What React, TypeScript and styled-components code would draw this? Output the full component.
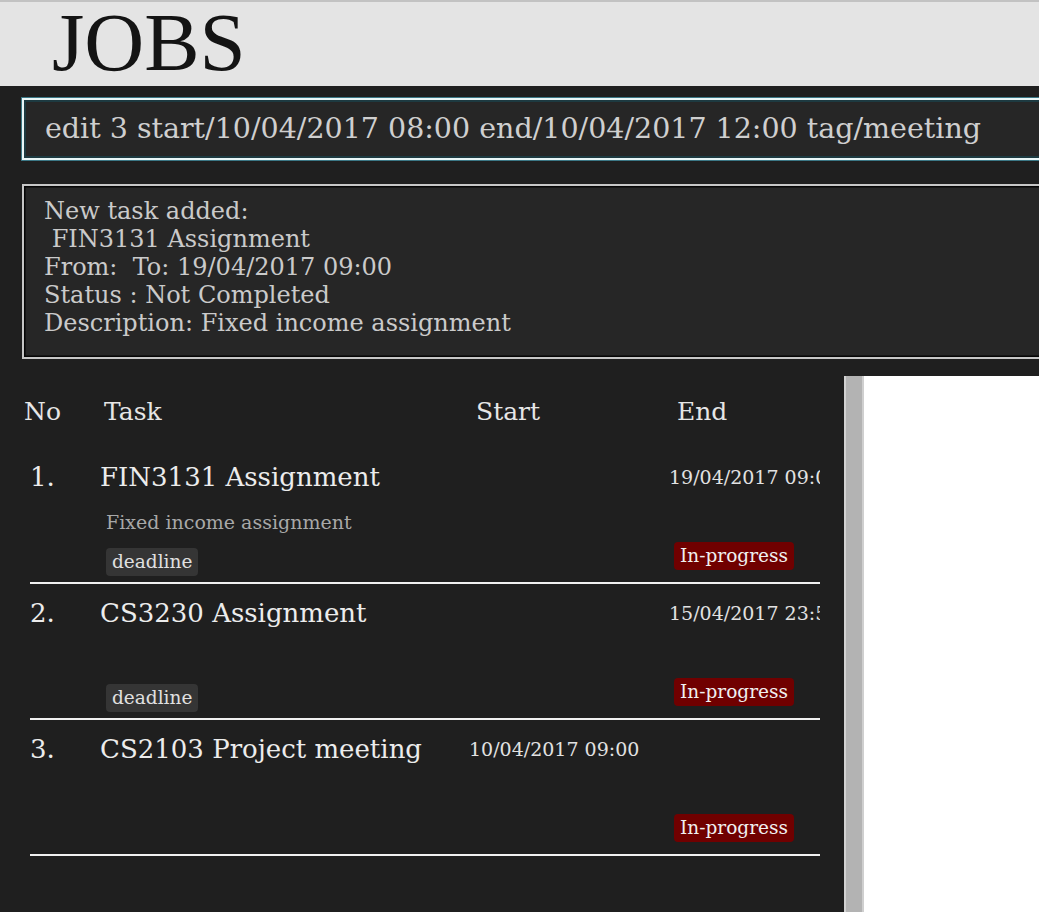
import React from "react";
import styled, { createGlobalStyle } from "styled-components";

const GlobalStyle = createGlobalStyle`
  html, body {
    margin: 0;
    padding: 0;
    background: #1f1f1f;
    overflow: hidden;
  }
  body {
    font-family: "DejaVu Serif", "Liberation Serif", serif;
  }
`;

const Window = styled.div`
  width: 1039px;
  height: 912px;
  display: flex;
  flex-direction: column;
  background: #1f1f1f;
  overflow: hidden;
`;

const TitleBar = styled.header`
  height: 84px;
  border-top: 2px solid #c2c2c2;
  background: #e4e4e4;
  padding-left: 52px;
  flex: none;
`;

const Title = styled.h1`
  margin: 0;
  font-family: "Liberation Serif", serif;
  font-weight: normal;
  font-size: 83px;
  line-height: 80px;
  color: #141414;
`;

const Console = styled.section`
  padding: 12px 0 0 22px;
  display: flex;
  flex-direction: column;
  gap: 24px;
  flex: none;
`;

const CommandBox = styled.div`
  box-sizing: border-box;
  width: 1100px;
  height: 62px;
  display: flex;
  align-items: center;
  padding-left: 21px;
  background: #262626;
  border: 2px solid #eaf6f7;
  box-shadow: 0 0 0 1px rgba(70, 150, 168, 0.75), inset 0 0 0 2px #1d3a41;
  font-size: 28.5px;
  line-height: 28px;
  color: #cfcfcf;
  white-space: pre;
`;

const ResultBox = styled.pre`
  box-sizing: border-box;
  margin: 0;
  width: 1100px;
  height: 175px;
  padding: 11px 0 0 20px;
  background: #262626;
  border: 2px solid #c6c6c6;
  box-shadow: inset 0 0 0 1.5px #050505;
  font-family: "DejaVu Serif", "Liberation Serif", serif;
  font-size: 24px;
  line-height: 28px;
  color: #cacaca;
  white-space: pre;
`;

const Split = styled.div`
  margin-top: 17px;
  flex: 1;
  display: flex;
  min-height: 0;
`;

const ListPanel = styled.div`
  width: 844px;
  flex: none;
  display: flex;
  flex-direction: column;
`;

const ScrollTrack = styled.div`
  width: 16px;
  flex: none;
  background: #b3b3b3;
  border-left: 2px solid #d2d2d2;
  border-right: 2px solid #cfcfcf;
`;

const BrowserPane = styled.div`
  flex: 1;
  background: #ffffff;
`;

const ListHeader = styled.div`
  box-sizing: border-box;
  height: 72px;
  padding: 21px 0 0 24px;
  display: grid;
  grid-template-columns: 80px 372px 201px auto;
  font-size: 25px;
  line-height: 30px;
  color: #e6e6e6;
`;

const TaskRow = styled.div`
  margin-left: 30px;
  width: 790px;
  display: grid;
  grid-template-columns: 70px 369px 200px 151px;
  grid-template-rows: 58px 32px 44px;
  border-bottom: 2px solid #f0f0f0;
  overflow: hidden;
`;

const Index = styled.div`
  grid-column: 1;
  grid-row: 1;
  align-self: center;
  font-size: 26px;
  line-height: 32px;
  color: #ececec;
`;

const TaskName = styled.div`
  grid-column: 2;
  grid-row: 1;
  align-self: center;
  font-size: 26px;
  line-height: 32px;
  color: #ececec;
  white-space: nowrap;
`;

const DateCell = styled.div<{ $col: number }>`
  grid-column: ${(p) => p.$col};
  grid-row: 1;
  align-self: center;
  font-size: 19px;
  line-height: 24px;
  color: #e2e2e2;
  white-space: nowrap;
  overflow: hidden;
`;

const Description = styled.div`
  grid-column: 2;
  grid-row: 2;
  align-self: center;
  margin-left: 6px;
  font-size: 19px;
  line-height: 32px;
  color: #a8a8a8;
  white-space: nowrap;
`;

const Tag = styled.span`
  grid-column: 2;
  grid-row: 3;
  justify-self: start;
  align-self: start;
  margin: 10px 0 0 6px;
  height: 28px;
  padding: 0 6px;
  border-radius: 4px;
  background: #353535;
  font-size: 18.5px;
  line-height: 28px;
  color: #e0e0e0;
`;

const StatusBadge = styled.span`
  grid-column: 4;
  grid-row: 3;
  justify-self: start;
  align-self: start;
  margin: 4px 0 0 5px;
  height: 28px;
  padding: 0 6px;
  border-radius: 4px;
  background: #700000;
  font-size: 18.5px;
  line-height: 28px;
  color: #f0f0f0;
  white-space: nowrap;
`;

type Task = {
  name: string;
  description?: string;
  start?: string;
  end?: string;
  tag?: string;
  status: string;
};

const tasks: Task[] = [
  {
    name: "FIN3131 Assignment",
    description: "Fixed income assignment",
    end: "19/04/2017 09:00",
    tag: "deadline",
    status: "In-progress",
  },
  {
    name: "CS3230 Assignment",
    end: "15/04/2017 23:59",
    tag: "deadline",
    status: "In-progress",
  },
  {
    name: "CS2103 Project meeting",
    start: "10/04/2017 09:00",
    status: "In-progress",
  },
];

const resultText = `New task added:
 FIN3131 Assignment
From:  To: 19/04/2017 09:00
Status : Not Completed
Description: Fixed income assignment`;

export default function App() {
  return (
    <>
      <GlobalStyle />
      <Window>
        <TitleBar>
          <Title>JOBS</Title>
        </TitleBar>
        <Console>
          <CommandBox>edit 3 start/10/04/2017 08:00 end/10/04/2017 12:00 tag/meeting</CommandBox>
          <ResultBox>{resultText}</ResultBox>
        </Console>
        <Split>
          <ListPanel>
            <ListHeader>
              <span>No</span>
              <span>Task</span>
              <span>Start</span>
              <span>End</span>
            </ListHeader>
            {tasks.map((t, i) => (
              <TaskRow key={t.name}>
                <Index>{i + 1}.</Index>
                <TaskName>{t.name}</TaskName>
                {t.start && <DateCell $col={3}>{t.start}</DateCell>}
                {t.end && <DateCell $col={4}>{t.end}</DateCell>}
                {t.description && <Description>{t.description}</Description>}
                {t.tag && <Tag>{t.tag}</Tag>}
                <StatusBadge>{t.status}</StatusBadge>
              </TaskRow>
            ))}
          </ListPanel>
          <ScrollTrack />
          <BrowserPane />
        </Split>
      </Window>
    </>
  );
}
